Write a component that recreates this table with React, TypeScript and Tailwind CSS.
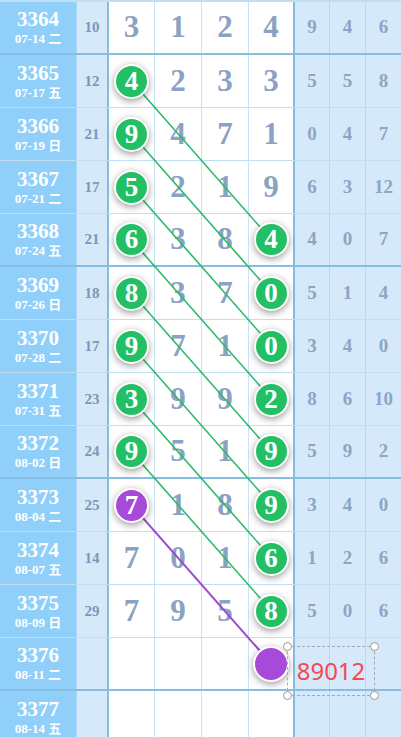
import React from "react";

type Row = { id: string; date: string; n: string; d: string[]; r: string[] };

// "*" = green ball, "#" = purple ball
const rows: Row[] = [
  { id: "3364", date: "07-14 二", n: "10", d: ["3", "1", "2", "4"], r: ["9", "4", "6"] },
  { id: "3365", date: "07-17 五", n: "12", d: ["4*", "2", "3", "3"], r: ["5", "5", "8"] },
  { id: "3366", date: "07-19 日", n: "21", d: ["9*", "4", "7", "1"], r: ["0", "4", "7"] },
  { id: "3367", date: "07-21 二", n: "17", d: ["5*", "2", "1", "9"], r: ["6", "3", "12"] },
  { id: "3368", date: "07-24 五", n: "21", d: ["6*", "3", "8", "4*"], r: ["4", "0", "7"] },
  { id: "3369", date: "07-26 日", n: "18", d: ["8*", "3", "7", "0*"], r: ["5", "1", "4"] },
  { id: "3370", date: "07-28 二", n: "17", d: ["9*", "7", "1", "0*"], r: ["3", "4", "0"] },
  { id: "3371", date: "07-31 五", n: "23", d: ["3*", "9", "9", "2*"], r: ["8", "6", "10"] },
  { id: "3372", date: "08-02 日", n: "24", d: ["9*", "5", "1", "9*"], r: ["5", "9", "2"] },
  { id: "3373", date: "08-04 二", n: "25", d: ["7#", "1", "8", "9*"], r: ["3", "4", "0"] },
  { id: "3374", date: "08-07 五", n: "14", d: ["7", "0", "1", "6*"], r: ["1", "2", "6"] },
  { id: "3375", date: "08-09 日", n: "29", d: ["7", "9", "5", "8*"], r: ["5", "0", "6"] },
  { id: "3376", date: "08-11 二", n: "", d: ["", "", "", "#"], r: ["", "", ""] },
  { id: "3377", date: "08-14 五", n: "", d: ["", "", "", ""], r: ["", "", ""] },
];

const serif = "font-['Liberation_Serif','Noto_Sans_CJK_SC',serif]";
const digitCols = ["w-[46px] border-r", "w-[47px] border-r", "w-[47px] border-r", "w-[46px] border-r-2 border-r-[#84bde2]"];
const rightCols = ["w-[35px] border-r", "w-[36px] border-r", "w-[35px]"];

function Ball({ v, purple }: { v: string; purple?: boolean }) {
  return (
    <div
      className={`relative z-20 flex items-center justify-center rounded-full border-2 border-white shadow-[0_2px_7px_rgba(0,0,0,0.4)] text-white font-bold text-[27px] leading-none ${serif} ${
        purple ? "bg-[#a74ad9]" : "bg-[#22bf64]"
      } ${v ? "w-[35px] h-[35px]" : "w-[36px] h-[36px]"}`}
    >
      {v}
    </div>
  );
}

export default function App() {
  const lines = [];
  for (let k = 0; k < 9; k++) {
    const y1 = 81 + 53 * k;
    const y2 = 81 + 53 * (k + 3);
    lines.push(
      <line
        key={k}
        x1={131.5}
        y1={y1}
        x2={271.5}
        y2={y2}
        stroke={k === 8 ? "#9a4ccf" : "#2cb968"}
        strokeWidth={k === 8 ? 2 : 1.6}
      />
    );
  }

  return (
    <div className="w-[401px] h-[737px] overflow-hidden bg-white">
      <div className="relative pt-[2px] bg-[#c0def2]">
        {rows.map((row, i) => {
          const thick = i % 4 === 0;
          return (
            <div
              key={row.id}
              className={`flex h-[53px] ${thick ? "border-b-2 border-[#86bee2]" : "border-b border-[#c2dff2]"}`}
            >
              <div className={`w-[77px] shrink-0 bg-[#8fcffa] border-r border-[#a9d8f7] flex flex-col items-center justify-center text-white font-bold ${serif}`}>
                <div className="text-[21px] leading-[22px]">{row.id}</div>
                <div className="text-[13px] leading-[17px]">{row.date}</div>
              </div>
              <div className={`w-[32px] shrink-0 bg-[#d5e9f9] border-r-2 border-[#84bde2] flex items-center justify-center text-[#7b97bd] font-bold text-[15px] ${serif}`}>
                {row.n}
              </div>
              {row.d.map((c, j) => {
                const ball = c.endsWith("*") || c.endsWith("#");
                const v = ball ? c.slice(0, -1) : c;
                return (
                  <div
                    key={j}
                    className={`${digitCols[j]} shrink-0 bg-white border-[#c8e3f4] flex items-center justify-center text-[#8aa2c3] font-bold text-[31px] ${serif}`}
                  >
                    {ball ? <Ball v={v} purple={c.endsWith("#")} /> : v}
                  </div>
                );
              })}
              {row.r.map((c, j) => (
                <div
                  key={j}
                  className={`${rightCols[j]} shrink-0 bg-[#d5e9fa] border-[#b7d9ef] flex items-center justify-center text-[#8ea5c5] font-bold text-[19px] ${serif}`}
                >
                  {c}
                </div>
              ))}
            </div>
          );
        })}
        <svg className="absolute left-0 top-0 z-10 pointer-events-none" width="401" height="744">
          {lines}
        </svg>
        <div className="absolute left-[287px] top-[646px] w-[88px] h-[50px] z-30 border border-dashed border-[#a9a9a9] flex items-center justify-center">
          <span className="text-[#f24a4f] text-[24px] font-['Noto_Sans',sans-serif] leading-none">89012</span>
          <span className="absolute -left-[5px] -top-[5px] w-[9px] h-[9px] rounded-full bg-white border border-[#999]" />
          <span className="absolute -right-[5px] -top-[5px] w-[9px] h-[9px] rounded-full bg-white border border-[#999]" />
          <span className="absolute -left-[5px] -bottom-[5px] w-[9px] h-[9px] rounded-full bg-white border border-[#999]" />
          <span className="absolute -right-[5px] -bottom-[5px] w-[9px] h-[9px] rounded-full bg-white border border-[#999]" />
        </div>
      </div>
    </div>
  );
}
